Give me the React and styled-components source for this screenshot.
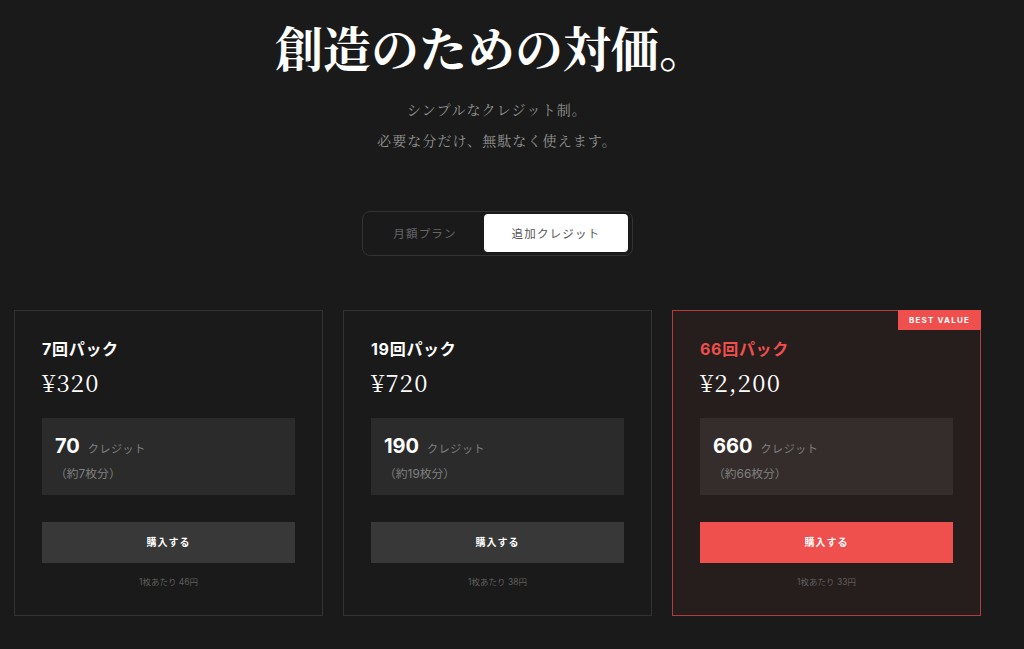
import React, { useState } from 'react'
import styled, { createGlobalStyle } from 'styled-components'

const SANS = `Inter, "Noto Sans CJK JP", sans-serif`
const SERIF = `"Noto Serif CJK JP", "Liberation Serif", "Noto Sans CJK JP", serif`

const GlobalStyle = createGlobalStyle`
    html, body {
        margin: 0;
        padding: 0;
        background: #1a1a1a;
    }
    * {
        box-sizing: border-box;
    }
`

const Page = styled.div`
    width: 1024px;
    height: 649px;
    overflow: hidden;
    padding: 0 43px 0 14px;
    background: #1a1a1a;
    font-family: ${SANS};
`

const Hero = styled.header`
    display: flex;
    flex-direction: column;
    align-items: center;
`

const Title = styled.h1`
    margin: 18px 13px 0 0;
    font-family: ${SERIF};
    font-size: 48px;
    line-height: 58px;
    font-weight: 700;
    color: #fff;
`

const Subtitle = styled.p`
    margin: 18px 1px 0 0;
    font-family: ${SERIF};
    font-size: 14px;
    line-height: 31px;
    letter-spacing: 1.1px;
    text-align: center;
    color: #949494;
`

const Toggle = styled.div`
    display: flex;
    width: 271px;
    height: 45px;
    margin-top: 55px;
    padding: 2px 4px 3px;
    gap: 4px;
    border: 1px solid #333;
    border-radius: 8px;
`

const ToggleOption = styled.button`
    flex: ${props => (props.$active ? '0 0 144px' : '1')};
    border: none;
    border-radius: 4px;
    padding: ${props => (props.$active ? '0' : '0 0 0 3px')};
    font-family: ${SANS};
    font-size: 11.5px;
    letter-spacing: 1.2px;
    background: ${props => (props.$active ? '#fff' : 'transparent')};
    color: ${props => (props.$active ? '#555' : '#666')};
`

const Plans = styled.section`
    display: grid;
    grid-template-columns: repeat(3, 309px);
    gap: 20px;
    margin-top: 54px;
`

const Card = styled.article`
    position: relative;
    height: 306px;
    padding: 27px 27px 0;
    border: 1px solid ${props => (props.$featured ? '#b23b3b' : '#333')};
    background: ${props => (props.$featured ? '#261e1d' : '#1a1a1a')};
`

const Badge = styled.span`
    position: absolute;
    top: -1px;
    right: -1px;
    width: 83px;
    height: 20px;
    background: #ef4f4d;
    color: #fff;
    font-size: 8px;
    font-weight: 700;
    line-height: 20px;
    letter-spacing: 1.2px;
    text-align: center;
`

const PlanName = styled.h2`
    margin: 0;
    font-size: 16px;
    line-height: 22px;
    font-weight: 700;
    letter-spacing: 0.7px;
    color: ${props => (props.$featured ? '#ef4f4d' : '#fff')};
`

const Price = styled.div`
    margin-top: 6px;
    font-family: ${SERIF};
    font-size: 24px;
    line-height: 32px;
    letter-spacing: 1.2px;
    font-variant-numeric: oldstyle-nums;
    color: #fff;
`

const CreditBox = styled.div`
    height: 77px;
    margin-top: 20px;
    padding: 15px 13px 0;
    background: ${props => (props.$featured ? '#352d2c' : '#2b2b2b')};
`

const CreditLine = styled.div`
    display: flex;
    align-items: baseline;
    gap: 8px;
    height: 26px;
`

const CreditCount = styled.span`
    font-size: 20px;
    line-height: 26px;
    font-weight: 700;
    color: #fff;
`

const CreditUnit = styled.span`
    font-size: 11px;
    letter-spacing: 0.6px;
    color: #808080;
`

const CreditNote = styled.div`
    margin-top: 6px;
    font-size: 11.8px;
    line-height: 18px;
    color: #808080;
`

const BuyButton = styled.button`
    display: block;
    width: 100%;
    height: 41px;
    margin-top: 27px;
    padding: 0 0 2px;
    border: none;
    font-family: ${SANS};
    font-size: 10px;
    font-weight: 700;
    letter-spacing: 1px;
    color: #fff;
    background: ${props => (props.$featured ? '#ef4f4d' : '#383838')};
`

const PerImage = styled.p`
    margin: 13px 0 0;
    font-size: 8.5px;
    line-height: 13px;
    text-align: center;
    color: #5f5f5f;
`

const plans = [
    { name: '7回パック', price: '¥320', credits: 70, note: '約7枚分', per: '1枚あたり 46円' },
    { name: '19回パック', price: '¥720', credits: 190, note: '約19枚分', per: '1枚あたり 38円' },
    { name: '66回パック', price: '¥2,200', credits: 660, note: '約66枚分', per: '1枚あたり 33円', featured: true },
]

export default function App() {
    const [tab, setTab] = useState('credit')
    return (
        <Page>
            <GlobalStyle />
            <Hero>
                <Title>創造のための対価。</Title>
                <Subtitle>
                    シンプルなクレジット制。<br />
                    必要な分だけ、無駄なく使えます。
                </Subtitle>
                <Toggle>
                    <ToggleOption $active={tab === 'monthly'} onClick={() => setTab('monthly')}>月額プラン</ToggleOption>
                    <ToggleOption $active={tab === 'credit'} onClick={() => setTab('credit')}>追加クレジット</ToggleOption>
                </Toggle>
            </Hero>
            <Plans>
                {plans.map(plan => (
                    <Card key={plan.name} $featured={plan.featured}>
                        {plan.featured && <Badge>BEST VALUE</Badge>}
                        <PlanName $featured={plan.featured}>{plan.name}</PlanName>
                        <Price>{plan.price}</Price>
                        <CreditBox $featured={plan.featured}>
                            <CreditLine>
                                <CreditCount>{plan.credits}</CreditCount>
                                <CreditUnit>クレジット</CreditUnit>
                            </CreditLine>
                            <CreditNote>（{plan.note}）</CreditNote>
                        </CreditBox>
                        <BuyButton $featured={plan.featured}>購入する</BuyButton>
                        <PerImage>{plan.per}</PerImage>
                    </Card>
                ))}
            </Plans>
        </Page>
    )
}
